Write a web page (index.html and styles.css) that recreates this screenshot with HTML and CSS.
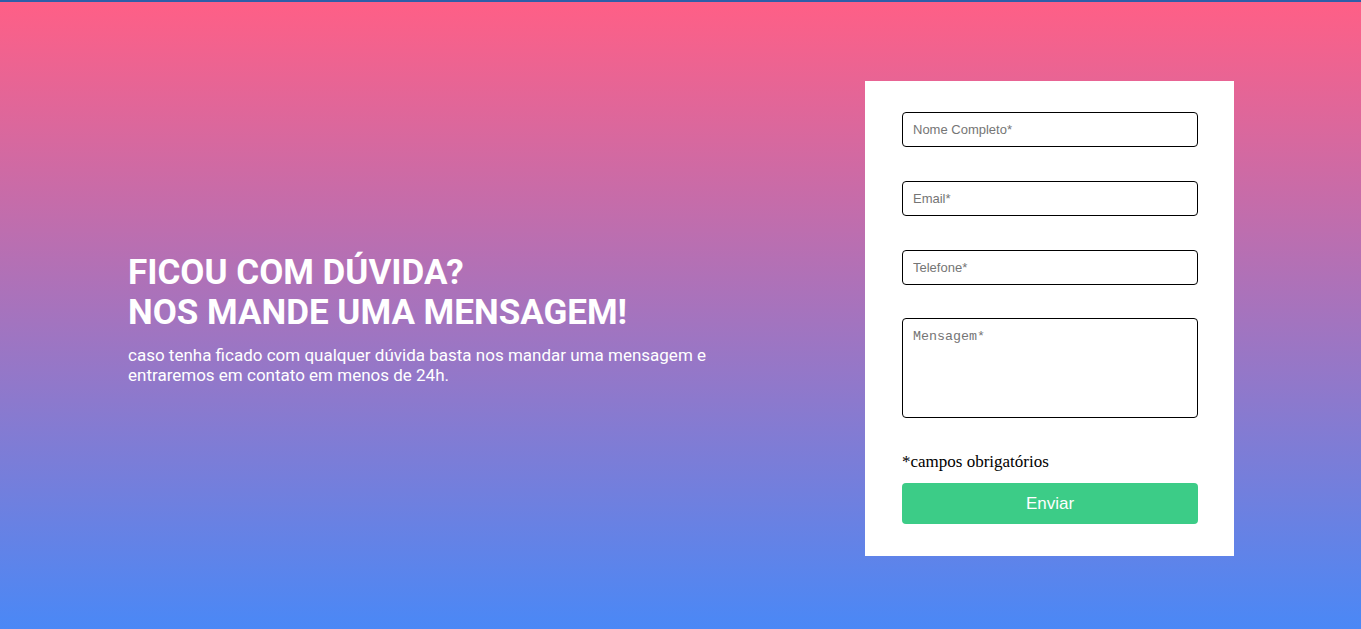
FILE: index.html
```html
<!DOCTYPE html>
<html lang="pt-BR">
<head>
<meta charset="utf-8">
<title>Contato</title>
<link rel="stylesheet" href="styles.css">
</head>
<body>
<div class="topbar"></div>
<section class="hero">
  <div class="intro">
    <h1 class="title">FICOU COM DÚVIDA?<br>NOS MANDE UMA MENSAGEM!</h1>
    <p class="lead">caso tenha ficado com qualquer dúvida basta nos mandar uma mensagem e entraremos em contato em menos de 24h.</p>
  </div>
  <form class="card">
    <input class="field" type="text" placeholder="Nome Completo*">
    <input class="field" type="email" placeholder="Email*">
    <input class="field field-last" type="tel" placeholder="Telefone*">
    <textarea class="field area" placeholder="Mensagem*"></textarea>
    <p class="note">*campos obrigatórios</p>
    <button class="send" type="button">Enviar</button>
  </form>
</section>
</body>
</html>
```
FILE: styles.css
```css
html, body { margin: 0; padding: 0; }
body { font-family: "Liberation Serif", serif; }
.topbar { height: 2px; background: #2f5ea8; }
.hero {
  height: 627px;
  box-sizing: border-box;
  background: linear-gradient(to bottom, #ff5f86 0%, #4a88f6 100%);
  display: flex;
  align-items: center;
  padding: 0 127px 0 128px;
  justify-content: space-between;
}
.intro { width: 600px; margin-top: 6px; color: #fff; font-family: Roboto, sans-serif; }
.title { margin: 0; font-size: 35px; line-height: 40px; font-weight: 700; }
.lead { margin: 12px 0 0; font-size: 17px; line-height: 20px; width: 600px; }
.card {
  width: 369px;
  box-sizing: border-box;
  background: #fff;
  padding: 31px 36px 32px 37px;
  display: flex;
  flex-direction: column;
  margin-top: 6px;
}
.field {
  height: 35px;
  box-sizing: border-box;
  border: 1px solid #000;
  border-radius: 4px;
  padding: 0 10px;
  font-family: "Liberation Sans", Arial, sans-serif;
  font-size: 13px;
  margin: 0 0 34px;
  outline: none;
}
.field-last { margin-bottom: 33px; }
.field::placeholder { color: #757575; }
.area {
  height: 100px;
  padding: 10px 10px;
  font-family: "Liberation Mono", monospace;
  font-size: 13.33px;
  resize: none;
  margin-bottom: 32px;
}
.note { margin: 0 0 10px; font-family: "Liberation Serif", serif; font-size: 17px; line-height: 23px; color: #000; }
.send {
  height: 41px;
  border: 0;
  border-radius: 4px;
  background: #3ccc87;
  color: #fff;
  font-family: "Liberation Sans", Arial, sans-serif;
  font-size: 17px;
}
```
